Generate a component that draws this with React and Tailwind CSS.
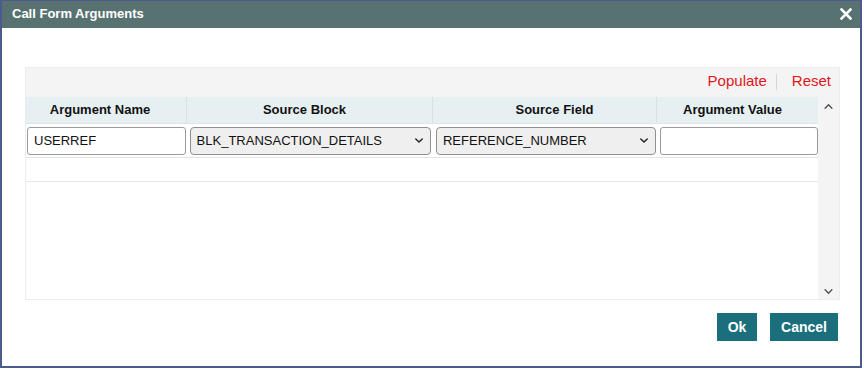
import React from 'react';

const font = { fontFamily: '"Liberation Sans", Arial, sans-serif' };

function Chevron({ up = false, className = '' }) {
  return (
    <svg viewBox="0 0 10 6" className={className} fill="none" stroke="currentColor" strokeWidth="1.8" strokeLinecap="round" strokeLinejoin="round">
      {up ? <path d="M1 5 L5 1 L9 5" /> : <path d="M1 1 L5 5 L9 1" />}
    </svg>
  );
}

function FakeSelect({ value, className }) {
  return (
    <div className={`h-[28px] rounded-[4px] border border-[#8f8f8f] bg-[#efefef] flex items-center justify-between pl-[6px] pr-[7px] text-[13px] text-[#111] ${className}`}>
      <span>{value}</span>
      <Chevron className="w-[8px] h-[5px] text-[#222]" />
    </div>
  );
}

export default function App() {
  return (
    <div className="w-[864px] h-[370px] bg-white" style={font}>
      <div className="w-[862px] h-[368px] border-x-2 border-b-2 border-t border-[#4b5b8c] flex flex-col bg-white">
        {/* Title bar */}
        <div className="h-[27px] bg-[#587272] flex items-center justify-between pl-[10px] pr-[8px] pb-[2px]">
          <span className="text-white font-bold text-[13px]">Call Form Arguments</span>
          <svg viewBox="0 0 12 12" className="w-[12px] h-[12px]" stroke="white" strokeWidth="2.6" strokeLinecap="square">
            <path d="M1.5 1.5 L10.5 10.5 M10.5 1.5 L1.5 10.5" />
          </svg>
        </div>

        {/* Body */}
        <div className="flex-1 flex flex-col pl-[23px] pr-[20px] pt-[39px]">
          <div className="h-[233px] bg-[#f4f4f4] border border-[#ededed] flex flex-col">
            <div className="h-[29px] flex items-center justify-end pr-[8px] pb-[2px] text-[15px] text-[#e3141b]">
              <span>Populate</span>
              <span className="w-px h-[16px] bg-[#d6d6d6] ml-[9px] mr-[15px]"></span>
              <span>Reset</span>
            </div>
            <div className="flex-1 flex">
              <div className="w-[792px] flex flex-col bg-white">
                <div className="h-[27px] bg-[#e6f0f3] flex text-[13px] font-bold text-[#111] border-b border-[#dfe6e9]">
                  <div className="w-[161px] flex items-center justify-center pr-[12px] border-r border-[#d8e2e5]">Argument Name</div>
                  <div className="w-[246px] flex items-center justify-center pr-[10px] border-r border-[#d8e2e5]">Source Block</div>
                  <div className="w-[224px] flex items-center justify-center pl-[20px] border-r border-[#d8e2e5]">Source Field</div>
                  <div className="flex-1 flex items-center justify-center pr-[10px]">Argument Value</div>
                </div>
                <div className="h-[34px] flex items-center gap-[3px] pl-[1px] border-b border-[#e4e4e4]">
                  <div className="w-[159px] h-[28px] border border-[#9a9a9a] rounded-[3px] bg-white flex items-center pl-[6px] text-[13px] text-[#111]">USERREF</div>
                  <FakeSelect value="BLK_TRANSACTION_DETAILS" className="w-[242px] ml-[1px]" />
                  <FakeSelect value="REFERENCE_NUMBER" className="w-[221px] ml-[2px]" />
                  <div className="w-[158px] h-[28px] border border-[#9a9a9a] rounded-[3px] bg-white ml-[1px]"></div>
                </div>
                <div className="h-[24px] border-b border-[#e8e8e8]"></div>
                <div className="flex-1"></div>
              </div>
              <div className="flex-1 flex flex-col items-center justify-between pt-[7px] pb-[5px] text-[#555]">
                <Chevron up className="w-[9px] h-[5px]" />
                <Chevron className="w-[9px] h-[5px]" />
              </div>
            </div>
          </div>

          <div className="flex justify-end gap-[13px] mt-[13px] pr-[2px]">
            <button className="w-[40px] h-[28px] bg-[#1b6e7c] text-white font-bold text-[14px]">Ok</button>
            <button className="w-[68px] h-[28px] bg-[#1b6e7c] text-white font-bold text-[14px]">Cancel</button>
          </div>
        </div>
      </div>
    </div>
  );
}
